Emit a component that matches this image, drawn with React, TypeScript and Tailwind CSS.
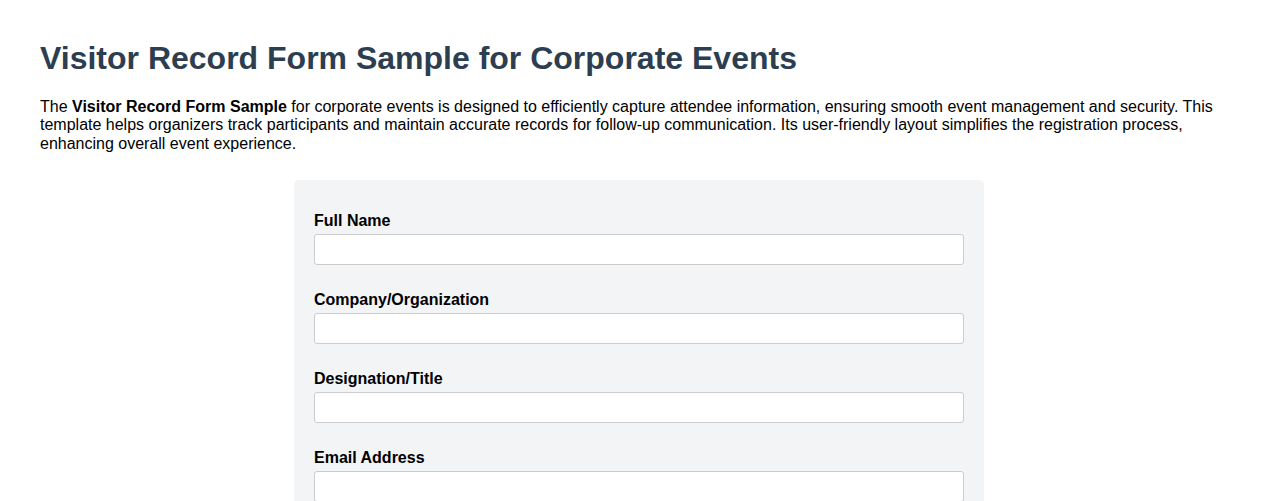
const fields = ["Full Name", "Company/Organization", "Designation/Title", "Email Address"];

export default function App() {
  return (
    <div className="min-h-screen bg-white px-10 pt-[40px] pb-10 font-['Liberation_Sans',Arial,sans-serif] text-black">
      <h1 className="text-[32px] leading-[37px] font-bold text-[#2c3e50]">
        Visitor Record Form Sample for Corporate Events
      </h1>
      <p className="mt-[21px] text-base leading-[18.4px]">
        The <strong>Visitor Record Form Sample</strong> for corporate events is designed to efficiently capture attendee
        information, ensuring smooth event management and security. This template helps organizers track participants
        and maintain accurate records for follow-up communication. Its user-friendly layout simplifies the registration
        process, enhancing overall event experience.
      </p>
      <form className="mx-auto mt-[27px] flex w-[690px] flex-col rounded-[5px] bg-[#f3f4f5] p-5">
        {fields.map((label) => (
          <div key={label} className="flex flex-col pt-[12px] pb-[14px]">
            <label className="mb-[5px] block text-base leading-[17px] font-bold">{label}</label>
            <input
              type="text"
              className="block h-[31px] w-full rounded-[3px] border border-[#cccccc] bg-white px-2 text-sm"
            />
          </div>
        ))}
      </form>
    </div>
  );
}
